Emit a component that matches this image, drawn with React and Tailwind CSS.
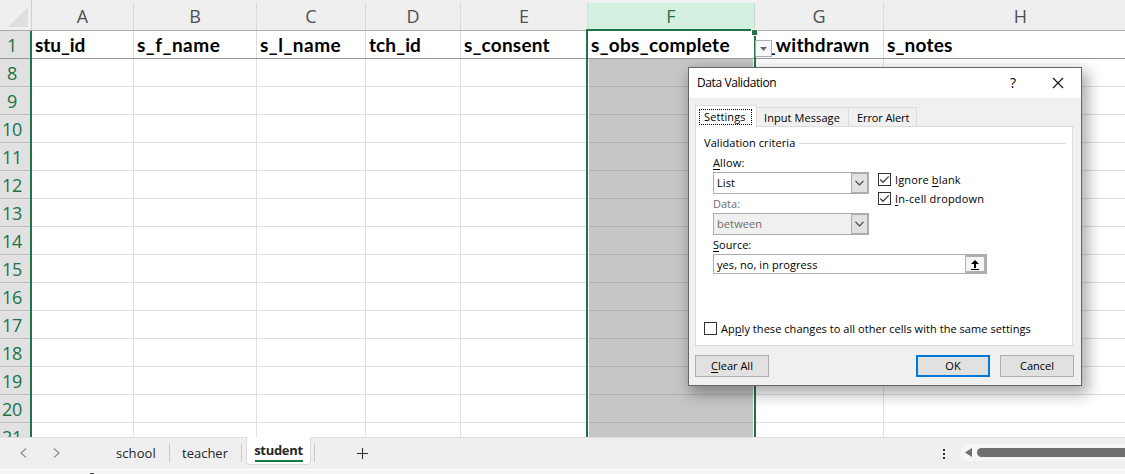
import React from "react";

const columns = [
  { id: "A", name: "stu_id", w: "w-[102px]", tracking: "tracking-[-0.05px]" },
  { id: "B", name: "s_f_name", w: "w-[123px]", tracking: "tracking-[0.5px]" },
  { id: "C", name: "s_l_name", w: "w-[109px]", tracking: "tracking-[0.5px]" },
  { id: "D", name: "tch_id", w: "w-[95px]", tracking: "tracking-[0.1px]" },
  { id: "E", name: "s_consent", w: "w-[127px]", tracking: "tracking-[0.2px]" },
  { id: "F", name: "s_obs_complete", w: "w-[167px]", tracking: "tracking-[0.3px]" },
  { id: "G", name: "s_withdrawn", w: "w-[129px]", tracking: "tracking-[0.3px]" },
  { id: "H", name: "s_notes", w: "w-[274px]", tracking: "tracking-[0.2px]" },
];
const rows = [8, 9, 10, 11, 12, 13, 14, 15, 16, 17, 18, 19, 20, 21];

function Sheet() {
  return (
    <div className="relative h-[437px] w-[1125px] overflow-hidden bg-white">
      <div className="flex h-[31px] border-b border-[#ababab] bg-[#efefef]">
        <div className="flex w-8 shrink-0 items-end justify-end border-r border-[#d0d0d0] pr-[3px] pb-[3px]">
          <svg width="20" height="20"><path d="M20 0V20H0Z" fill="#dfdfdf" /></svg>
        </div>
        {columns.map((c) => (
          <div key={c.id} className={`flex shrink-0 flex-col pt-[3px] ${c.w}`}>
            <div className={`flex h-[27px] items-center justify-center border-r font-['Open_Sans'] text-[18px] leading-[27px] ${c.id === "F" ? "border-[#c4d8cc] bg-[#d3f0e0] text-[#217346]" : "border-[#dadada] text-[#505050]"}`}>
              {c.id}
            </div>
          </div>
        ))}
      </div>
      <div className="flex h-7 border-b border-[#999999]">
        <div className="w-8 shrink-0 bg-[#e1e1e1] pr-2 text-center font-['Open_Sans'] text-[18px] leading-[29px] tracking-[-0.3px] text-[#217346]">1</div>
        {columns.map((c) => (
          <div key={c.id} className={`shrink-0 border-r border-[#dcdcdc] pl-[3px] font-['Lato'] text-[19px] leading-[28px] font-bold whitespace-nowrap text-black ${c.w} ${c.tracking}`}>
            {c.name}
          </div>
        ))}
      </div>
      {rows.map((r) => (
        <div key={r} className="flex h-7">
          <div className="w-8 shrink-0 border-b border-[#bdbdbd] bg-[#e1e1e1] pr-2 text-center font-['Open_Sans'] text-[18px] leading-[29px] tracking-[-0.3px] text-[#217346]">{r}</div>
          {columns.map((c) => (
            <div key={c.id} className={`shrink-0 border-r border-b ${c.w} ${c.id === "F" ? "border-[#b0b0b0] bg-[#c6c6c6]" : "border-[#e0e0e0]"}`} />
          ))}
        </div>
      ))}
      <div className="absolute top-[31px] left-[30px] h-[406px] w-0.5 bg-[#217346]" />
      <div className="absolute top-[29px] left-[586px] h-[410px] w-[170px] border-2 border-[#217346]" />
      <div className="absolute top-[59px] left-[588px] h-[378px] w-px bg-white" />
      <div className="absolute top-[59px] left-[753px] h-[378px] w-px bg-white" />
      <div className="absolute top-[29px] left-[751px] h-[7px] w-[7px] border border-white bg-[#217346]" />
      <div className="absolute top-[40px] left-[755px] flex h-[17px] w-[17px] items-center justify-center border border-[#a5adb8] bg-[#f7f8fb]">
        <svg width="7" height="4"><path d="M0 0H7L3.5 4Z" fill="#686868" /></svg>
      </div>
    </div>
  );
}

function CheckBox({ checked }) {
  return (
    <span className="flex h-[13px] w-[13px] shrink-0 items-center justify-center border border-[#333] bg-white">
      {checked && (
        <svg width="11" height="11" fill="none" stroke="#444" strokeWidth="1.3"><path d="M1.2 5.5L4 8.3L9.8 2.4" /></svg>
      )}
    </span>
  );
}

function Combo({ value, disabled }) {
  return (
    <div className={`flex h-[22px] w-[156px] border border-[#abadb3] ${disabled ? "bg-[#f0f0f0] text-[#6d6d6d]" : "bg-white"}`}>
      <span className="flex-1 pl-[3px] leading-[19px] tracking-[0.1px]">{value}</span>
      <span className="flex w-[17px] items-center justify-center border border-[#adadad] bg-[#e1e1e1]">
        <svg width="9" height="6" fill="none" stroke="#444" strokeWidth="1.2"><path d="M0.5 0.8L4.5 4.8L8.5 0.8" /></svg>
      </span>
    </div>
  );
}

const U = ({ children }) => <span className="underline underline-offset-2">{children}</span>;

function Dialog() {
  return (
    <div className="absolute top-[67px] left-[688px] flex h-[319px] w-[394px] flex-col border border-[#666] bg-[#f0f0f0] font-['Open_Sans'] text-[11px] leading-4 whitespace-nowrap text-black shadow-[4px_6px_14px_2px_rgba(0,0,0,0.33)]">
      <div className="flex h-[30px] shrink-0 items-center bg-white pl-2 text-[12px]">
        <span className="flex-1 tracking-[-0.4px]">Data Validation</span>
        <span className="mr-[-2px] w-[10px] text-center text-[14px]">?</span>
        <svg className="mr-[17px] ml-[36px]" width="12" height="12" stroke="#111" strokeWidth="1.1"><path d="M1 1L11 11M11 1L1 11" /></svg>
      </div>
      <div className="flex h-[28px] shrink-0 items-end pt-[7px] pl-1.5">
        <div className="relative z-10 -mb-px flex h-[22px] w-[62px] items-start border border-b-0 border-[#dcdcdc] bg-white pt-[3px] pl-[3px]">
          <span className="h-4 w-[53px] border border-dotted border-black pl-1 leading-[13px] tracking-[0.1px]">Settings</span>
        </div>
        <div className="h-[19px] w-[92px] border-t border-r border-[#dcdcdc] pl-[7px] leading-[19px] tracking-[0.08px]">Input Message</div>
        <div className="h-[19px] w-[68px] border-t border-r border-[#dcdcdc] pl-2 leading-[19px] tracking-[-0.1px]">Error Alert</div>
      </div>
      <div className="ml-1.5 flex h-[220px] w-[378px] shrink-0 flex-col border border-[#dcdcdc] bg-white pt-2">
        <div className="flex h-4 items-center pr-1.5 pl-2">
          <span className="tracking-[0.07px]">Validation criteria</span>
          <span className="ml-1 h-px flex-1 bg-[#dcdcdc]" />
        </div>
        <div className="flex pt-1 pl-[17px]">
          <div className="w-[165px]">
            <div className="h-[17px] leading-[15px] tracking-[0.15px]"><U>A</U>llow:</div>
            <Combo value="List" />
            <div className="h-[19px] leading-[20px] text-[#6d6d6d]">Data:</div>
            <Combo value="between" disabled />
          </div>
          <div className="flex flex-col gap-1.5 pt-[18px]">
            <div className="flex h-[13px] items-center gap-1"><CheckBox checked /><span className="tracking-[0.13px]">Ignore <U>b</U>lank</span></div>
            <div className="flex h-[13px] items-center gap-1"><CheckBox checked /><span className="tracking-[0.17px]"><U>I</U>n-cell dropdown</span></div>
          </div>
        </div>
        <div className="pl-[17px]">
          <div className="h-[19px] leading-[20px]"><U>S</U>ource:</div>
          <div className="flex h-5 w-[274px] border border-[#abadb3]">
            <span className="flex-1 pl-[3px] leading-[20px] tracking-[0.07px]">yes, no, in progress</span>
            <span className="flex w-[21px] items-center justify-center border-2 border-l border-[#b0b0b0] bg-[#f4f4f4]">
              <svg width="10" height="11" fill="none" stroke="#000"><path d="M1 10.5H9" /><path d="M5 9V3" strokeWidth="2" /><path d="M1 5L5 1L9 5Z" fill="#000" stroke="none" /></svg>
            </span>
          </div>
        </div>
        <div className="mt-12 flex h-[13px] items-center gap-1 pl-2"><CheckBox /><span className="tracking-[0.05px]">Ap<U>p</U>ly these changes to all other cells with the same settings</span></div>
      </div>
      <div className="flex pt-[9px] pl-1.5 text-center leading-[19px]">
        <div className="h-[22px] w-[74px] border border-[#adadad] bg-[#e1e1e1]"><U>C</U>lear All</div>
        <div className="ml-[147px] h-[22px] w-[74px] border-2 border-[#0078d7] bg-[#e1e1e1] leading-[17px]">OK</div>
        <div className="ml-2.5 h-[22px] w-[74px] border border-[#adadad] bg-[#e1e1e1]">Cancel</div>
      </div>
    </div>
  );
}

function TabBar() {
  return (
    <div className="flex h-8 w-[1125px] border-t border-[#dedede] bg-[#efefef] font-['Open_Sans'] text-[13px] leading-[31px] text-[#262626]">
      <svg className="shrink-0" width="116" height="31" fill="none" stroke="#909090" strokeWidth="1.3"><path d="M26 10.5L21 15L26 19.5M54 10.5L59 15L54 19.5" /></svg>
      <div className="w-[53px] tracking-[0.1px]">school</div>
      <div className="mt-1.5 h-[18px] w-px bg-[#c8c8c8]" />
      <div className="w-[71px] pl-3">teacher</div>
      <div className="mt-1.5 h-[18px] w-px bg-[#c8c8c8]" />
      <div className="-mt-px ml-1 flex h-7 w-[65px] flex-col items-center rounded-b border border-t-0 border-[#dadada] bg-white font-bold">
        <span className="flex h-[25px] w-12 justify-center border-b-2 border-[#107c41] leading-[27px] tracking-[-0.3px]">student</span>
      </div>
      <div className="mt-1.5 ml-[3px] h-[18px] w-px bg-[#c8c8c8]" />
      <svg className="ml-[42px]" width="12" height="30" stroke="#333" strokeWidth="1.1"><path d="M0 15.5H11M5.5 10V21" /></svg>
      <svg className="ml-[573px]" width="4" height="30" fill="#333"><path d="M1 11h2v2h-2zM1 15h2v2h-2zM1 19h2v2h-2z" /></svg>
      <div className="mt-1.5 ml-[14px] flex h-[17px] flex-1 items-center rounded-l-full bg-[#f6f6f6] pl-[5px]">
        <svg width="7" height="9"><path d="M7 0V9L0 4.5Z" fill="#6e6e6e" /></svg>
        <div className="ml-[5px] h-[9px] flex-1 rounded-l-full bg-[#707070]" />
      </div>
    </div>
  );
}

export default function App() {
  return (
    <div className="relative h-[474px] w-[1125px] overflow-hidden bg-[#f4f4f4]">
      <Sheet />
      <TabBar />
      <div className="flex h-[5px] border-t border-white pt-[3px] pl-[90px]"><span className="h-px w-1 bg-[#444]" /></div>
      <Dialog />
    </div>
  );
}
